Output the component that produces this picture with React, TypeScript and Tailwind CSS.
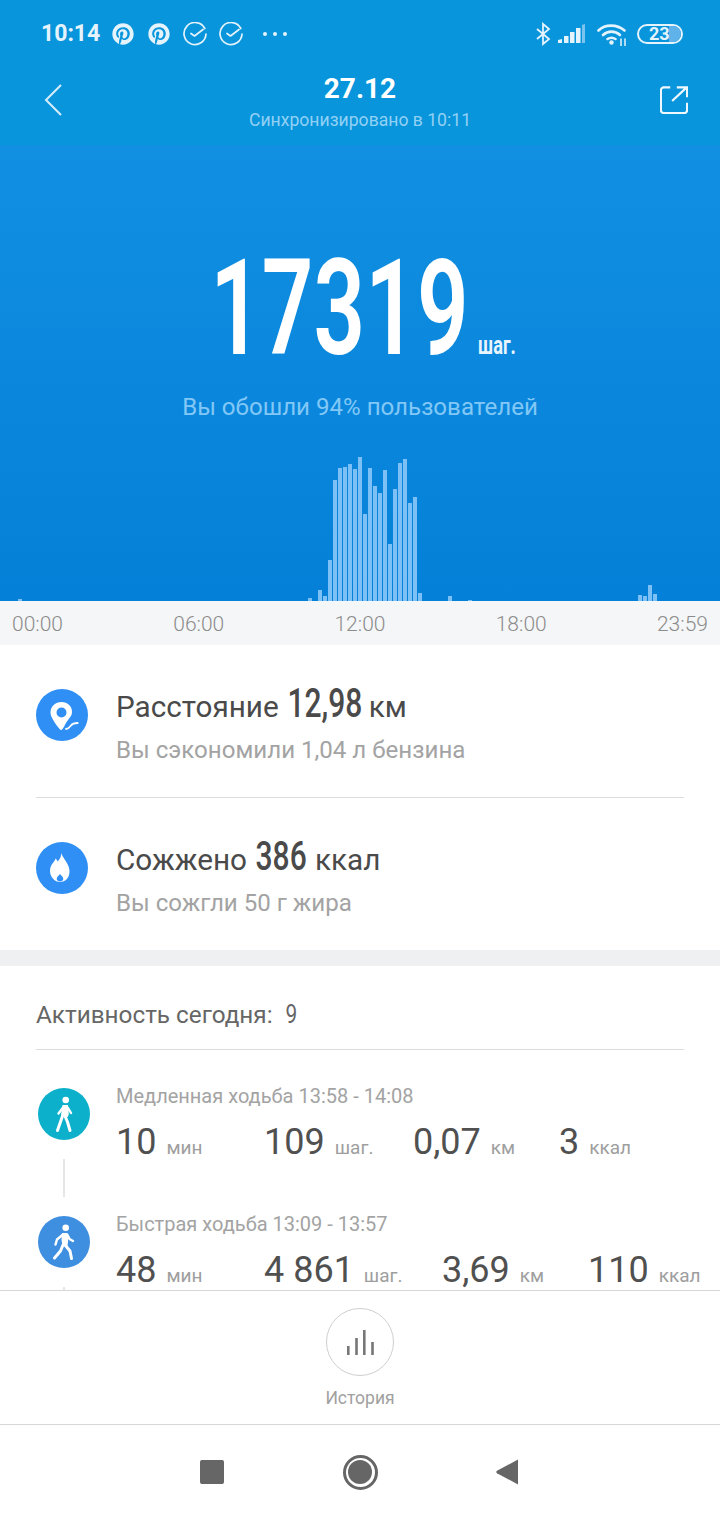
import React from "react";
import { FaPinterest } from "react-icons/fa";

const sans = "font-['Roboto','Noto_Sans',sans-serif]";

const heights: Record<number, number> = {
  20: 2, 310: 3, 320: 11, 325: 5, 330: 41, 335: 121, 340: 133, 345: 134, 350: 137, 355: 132, 360: 144,
  365: 87, 370: 133, 375: 115, 380: 108, 385: 131, 390: 57, 395: 112, 400: 138, 405: 142, 410: 98,
  415: 104, 420: 8, 450: 5, 470: 1, 640: 6, 645: 5, 650: 16, 655: 7,
};
const bars = Array.from({ length: 143 }, (_, i) => heights[(i + 1) * 5] ?? 0);

function Condensed({ box, inner, children }: { box: string; inner: string; children: React.ReactNode }) {
  return (
    <span className={`inline-flex justify-center shrink-0 ${box}`}>
      <span className={`inline-block whitespace-nowrap shrink-0 ${inner}`}>{children}</span>
    </span>
  );
}

function CheckCircle() {
  return (
    <svg width="24" height="24" viewBox="0 0 24 24" fill="none" stroke="#e4f3fc" strokeWidth="1.700" strokeLinecap="round" strokeLinejoin="round" className="block">
      <path d="M21.800 6.500A11 11 0 1 0 23 12" />
      <path d="M8 11.500l3.500 2.500L20 7.500" />
    </svg>
  );
}

function StatusRight() {
  return (
    <div className="flex items-center">
      <svg width="16" height="24" viewBox="0 0 16 24" fill="none" stroke="#e4f3fc" strokeWidth="1.800">
        <path d="M2 7l12 10-6 5V2l6 5L2 17" />
      </svg>
      <svg width="28" height="20" viewBox="0 0 28 20" className="ml-[7px]">
        <path d="M0 19v-3l4-1v4z" fill="#e4f3fc" />
        <path d="M6 19v-7h4.500v7z" fill="#e4f3fc" />
        <path d="M12 19V8h4.500v11z" fill="#e4f3fc" />
        <path d="M18 19V4h4.500v15z" fill="#e4f3fc" />
        <path d="M24 19V1l3-1v19z" fill="#7cc4ef" />
      </svg>
      <svg width="30" height="24" viewBox="0 0 30 24" fill="none" stroke="#e4f3fc" strokeWidth="2.600" className="ml-[11px]" strokeLinecap="round">
        <path d="M1.500 8.500C8 2 20 2 27.500 8.500" />
        <path d="M6 13c5-4.500 12-4.500 17 0" />
        <path d="M10.500 17c2.500-1.600 5.500-1.600 8 0" />
        <circle cx="14.500" cy="20.500" r="2.200" fill="#e4f3fc" stroke="none" />
        <path d="M24 17v7M28 17v7" strokeWidth="1.500" />
      </svg>
      <div className="relative ml-[10px] h-[20px] w-[46px] rounded-full border-2 border-[#e4f3fc] overflow-hidden flex items-center">
        <div className="absolute right-0 top-0 bottom-0 w-[12px] bg-[#5fb2ea]" />
        <span className={`relative ml-[10px] text-[18px] leading-none font-bold text-[#e4f3fc] ${sans}`}>23</span>
      </div>
    </div>
  );
}

function PinIcon() {
  return (
    <svg width="52" height="52" viewBox="0 0 52 52" className="shrink-0">
      <circle cx="26" cy="26" r="26" fill="#2f8ff5" />
      <path fillRule="evenodd" fill="#fff" d="M25.500 13C19.400 13 14.500 17.600 14.500 23.500c0 5 5.200 11.500 9.300 16.800.8 1 1.800 1 2.500 0 .5-.8 1.200-1.700 2-3 .4-1.400 1.500-3 3-5.300 2.200-3 4.700-5.400 4.700-8.500C36.500 17.600 31.600 13 25.500 13zm0 5.500a5 5 0 1 1 0 10 5 5 0 0 1 0-10z" />
      <path d="M30 40c2.500-.2 3.400-1.500 4.700-3.200 1.500-2 3.500-2.800 7-2.800" fill="none" stroke="#fff" strokeWidth="1.800" strokeLinecap="round" />
    </svg>
  );
}

function FlameIcon() {
  return (
    <svg width="52" height="52" viewBox="0 0 52 52" className="shrink-0">
      <circle cx="26" cy="26" r="26" fill="#2f8ff5" />
      <path fillRule="evenodd" fill="#fff" d="M25 11c.5 4-1.500 6.500-3.500 8.500-.5-1.500-1-2.300-2-3-.2 3-5.500 5.800-5.500 12.300C14 35.500 19 40 24 40s9.500-4 9.500-10.500c0-7.500-5.500-11.500-8.500-18.500zm-1 21c1.200 1.500 3.300 3 3.300 5 0 1.500-1.700 2.500-3.300 2.500s-3.300-1-3.300-2.500c0-2 2.100-3.500 3.300-5z" />
    </svg>
  );
}

function SlowWalk() {
  return (
    <svg width="52" height="52" viewBox="0 0 52 52" className="shrink-0 block">
      <circle cx="26" cy="26" r="26" fill="#0cb0cb" />
      <circle cx="27.700" cy="12" r="3.300" fill="#fff" />
      <path d="M24.500 17h5.500l.8 9-1 3-1.800-.5-2 0-3-1.500z" fill="#fff" />
      <g fill="none" stroke="#fff" strokeLinecap="round" strokeLinejoin="round">
        <path d="M25.500 19l-5 6.500" strokeWidth="2.400" />
        <path d="M30 20l3 5" strokeWidth="2.400" />
        <path d="M24.500 28l-5 14.500" strokeWidth="3" />
        <path d="M27 28l2.500 6 2.500 8.500" strokeWidth="3" />
      </g>
    </svg>
  );
}

function FastWalk() {
  return (
    <svg width="52" height="52" viewBox="0 0 52 52" className="shrink-0 block">
      <circle cx="26" cy="26" r="26" fill="#3f8fe0" />
      <circle cx="27.700" cy="11.700" r="3.300" fill="#fff" />
      <path d="M24 17h5.500l1 4-1 9-5 0-1-6z" fill="#fff" />
      <g fill="none" stroke="#fff" strokeLinecap="round" strokeLinejoin="round">
        <path d="M25 18.500l-6 5-1.500 5" strokeWidth="2.400" />
        <path d="M29.500 19l2 4 3.500 2" strokeWidth="2.400" />
        <path d="M25 29l-2.500 6-6 7" strokeWidth="3" />
        <path d="M27 29l5 6 1.500 7.500" strokeWidth="3" />
      </g>
    </svg>
  );
}

function StatRow({ title, cells, icon }: { title: string; cells: [string, string, number][]; icon: React.ReactNode }) {
  return (
    <div className="flex h-[128px]">
      <div className="w-[116px] pl-[38px] shrink-0">
        {icon}
        <div className="ml-[25px] mt-[19px] h-[38px] w-[2px] bg-[#e6e6e6]" />
      </div>
      <div className="flex-1 -mt-[4px]">
        <div className="text-[20px] leading-[24px] text-[#a3a3a3]">{title}</div>
        <div className="flex mt-[13px] h-[42px] items-baseline">
          {cells.map(([num, unit, w], i) => (
            <div key={i} className="flex items-baseline shrink-0" style={{ width: w }}>
              <span className="text-[36px] leading-[42px] text-[#505050]">{num}</span>
              <span className="ml-[10px] text-[19px] text-[#9e9e9e]">{unit}</span>
            </div>
          ))}
        </div>
      </div>
    </div>
  );
}

export default function App() {
  return (
    <div className={`w-[720px] h-[1520px] bg-white flex flex-col overflow-hidden ${sans}`}>
      <header className="h-[145px] shrink-0 bg-[#0895db] text-white relative">
        <div className="h-[68px] flex items-center justify-between pl-[41px] pr-[37px]">
          <div className="flex items-center">
            <span className="text-[23px] font-bold text-[#e4f3fc] w-[70px]">10:14</span>
            <span className="ml-[1px]"><FaPinterest size={22} color="#e4f3fc" className="block" /></span>
            <span className="ml-[14px]"><FaPinterest size={22} color="#e4f3fc" className="block" /></span>
            <span className="ml-[13px]"><CheckCircle /></span>
            <span className="ml-[12px]"><CheckCircle /></span>
            <span className="ml-[20px] flex gap-[6px]">
              <i className="size-[4px] rounded-full bg-[#e4f3fc]" />
              <i className="size-[4px] rounded-full bg-[#e4f3fc]" />
              <i className="size-[4px] rounded-full bg-[#e4f3fc]" />
            </span>
          </div>
          <StatusRight />
        </div>
        <div className="flex items-start justify-between pl-[44px] pr-[32px]">
          <div className="w-[16px]">
            <svg width="20" height="34" viewBox="0 0 20 34" fill="none" stroke="#d5edfb" strokeWidth="2" className="mt-[15px]">
              <path d="M17 2L2 17l15 15" />
            </svg>
          </div>
          <div className="text-center mt-[1px]">
            <div className="text-[28px] leading-[40px] font-bold">27.12</div>
            <div className="text-[17.600px] leading-[22px] text-[#92d1f5]">Синхронизировано в 10:11</div>
          </div>
          <svg width="28" height="28" viewBox="0 0 30 30" fill="none" stroke="#eef8fe" strokeWidth="2.300" className="mt-[18px]">
            <path d="M11 1.500H4a3 3 0 0 0-3 3V26a3 3 0 0 0 3 3h22a3 3 0 0 0 3-3v-8" />
            <path d="M13 16L28 2M18 1.500h11V12" />
          </svg>
        </div>
      </header>

      <section className="h-[456px] shrink-0 bg-gradient-to-b from-[#1190e2] to-[#0580d8] flex flex-col">
        <div className="pt-[96px] h-[231px] flex items-baseline justify-center text-white">
          <div className="ml-[8px] flex items-baseline">
            <Condensed box="w-[254px]" inner="scale-x-[0.675]">
              <span className="text-[134px] leading-[135px] font-semibold">17319</span>
            </Condensed>
            <Condensed box="w-[38px] ml-[11px]" inner="scale-x-[0.7]">
              <span className="text-[26px] font-bold text-[#e8f5fe]">шаг.</span>
            </Condensed>
          </div>
        </div>
        <div className="mt-[16px] text-center text-[24.100px] leading-[30px] text-[#82c8f6]">Вы обошли 94% пользователей</div>
        <div className="flex-1 flex items-end gap-px pl-[3px]">
          {bars.map((h, i) => (
            <div key={i} className="w-1 bg-[#7cc0f6]" style={{ height: h }} />
          ))}
        </div>
      </section>

      <div className="h-[44px] shrink-0 bg-[#f5f6f7] flex items-center justify-between px-[12px] pt-[3px] text-[21px] font-light text-[#8c8c8c]">
        <span>00:00</span><span>06:00</span><span>12:00</span><span>18:00</span><span>23:59</span>
      </div>

      <section className="px-[36px] shrink-0">
        <div className="h-[153px] flex items-start border-b border-[#dcdcdc] pt-[44px]">
          <PinIcon />
          <div className="ml-[28px] -mt-[5px]">
            <div className="flex items-baseline text-[29.700px] leading-[40px] text-[#4a4a4a] h-[40px]">
              Расстояние
              <Condensed box="w-[74px] ml-[9px]" inner="scale-x-[0.75]"><span className="text-[40px] font-medium">12,98</span></Condensed>
              <span className="ml-[7px]">км</span>
            </div>
            <div className="text-[24.100px] leading-[30px] mt-[11px] text-[#a3a3a3]">Вы сэкономили 1,04 л бензина</div>
          </div>
        </div>
        <div className="h-[152px] flex items-start pt-[44px]">
          <FlameIcon />
          <div className="ml-[28px] -mt-[5px]">
            <div className="flex items-baseline text-[29.700px] leading-[40px] text-[#4a4a4a] h-[40px]">
              Сожжено
              <Condensed box="w-[52px] ml-[8px]" inner="scale-x-[0.75]"><span className="text-[40px] font-medium">386</span></Condensed>
              <span className="ml-[8px]">ккал</span>
            </div>
            <div className="text-[24.100px] leading-[30px] mt-[11px] text-[#a3a3a3]">Вы сожгли 50 г жира</div>
          </div>
        </div>
      </section>

      <div className="h-[16px] shrink-0 bg-[#eef0f1]" />

      <div className="mx-[36px] h-[84px] shrink-0 border-b border-[#dcdcdc] flex items-baseline pt-[33px] text-[24.300px] leading-[30px] text-[#666]">
        Активность сегодня:
        <Condensed box="w-[12px] ml-[13px]" inner="scale-x-[0.8]"><span className="text-[26px]">9</span></Condensed>
      </div>

      <section className="h-[240px] shrink-0 overflow-hidden pt-[38px]">
        <StatRow
          title="Медленная ходьба 13:58 - 14:08"
          icon={<SlowWalk />}
          cells={[["10", "мин", 148], ["109", "шаг.", 149], ["0,07", "км", 146], ["3", "ккал", 120]]}
        />
        <StatRow
          title="Быстрая ходьба 13:09 - 13:57"
          icon={<FastWalk />}
          cells={[["48", "мин", 148], ["4 861", "шаг.", 178], ["3,69", "км", 146], ["110", "ккал", 120]]}
        />
      </section>

      <section className="h-[135px] shrink-0 border-y border-[#d8d8d8] flex flex-col items-center pt-[17px]">
        <div className="size-[68px] rounded-full border border-[#cfcfcf] flex items-center justify-center">
          <svg width="27" height="25" viewBox="0 0 27 25" fill="#777">
            <rect x="0" y="16" width="2.600" height="9" />
            <rect x="8.200" y="8" width="2.600" height="17" />
            <rect x="16" y="0" width="2.600" height="25" />
            <rect x="24.200" y="12" width="2.600" height="13" />
          </svg>
        </div>
        <div className="mt-[10px] text-[17.500px] leading-[24px] text-[#a0a0a0]">История</div>
      </section>

      <nav className="flex-1 flex items-center justify-center">
        <div className="flex items-center -mt-[1px] -ml-[3px]">
          <div className="size-[24px] rounded-[2px] bg-[#666]" />
          <div className="ml-[119px] size-[35px] rounded-full border-[3.500px] border-[#666] p-[2.500px]">
            <div className="size-full rounded-full bg-[#666]" />
          </div>
          <svg width="22" height="26" viewBox="0 0 22 26" fill="#666" className="ml-[118px]"><path d="M22 .5v25L1 14.200a1.400 1.400 0 0 1 0-2.400z" /></svg>
        </div>
      </nav>
    </div>
  );
}
